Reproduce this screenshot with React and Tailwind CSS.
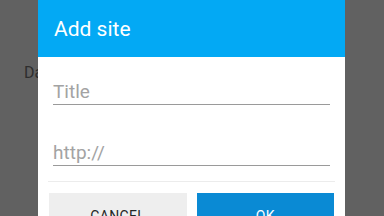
import React from "react";

const font = { fontFamily: "Roboto, 'Liberation Sans', sans-serif" };

function Field({ placeholder, className = "" }) {
  return (
    <div className={"border-b-[1.5px] border-[#9a9a9a] " + className}>
      <div className="h-[24px] leading-[24px] text-[19px] text-[#a3a3a3]">{placeholder}</div>
    </div>
  );
}

export default function App() {
  return (
    <div className="relative w-[384px] h-[216px] overflow-hidden bg-[#616161]" style={font}>
      {/* page behind the dimmed overlay */}
      <div className="pl-[24px] pt-[64px] text-[16px] leading-[18px] text-[#2e2e2e]">Data</div>

      {/* dialog */}
      <div className="absolute left-[38px] top-0 w-[307px] h-[240px] bg-white flex flex-col">
        <div className="h-[57px] bg-[#03a9f4] flex items-center px-[16px] pt-[2px]">
          <span className="text-white text-[21px] leading-none">Add site</span>
        </div>
        <div className="px-[15px] pt-[23px]">
          <Field placeholder="Title" />
          <Field placeholder="http://" className="mt-[36px]" />
        </div>
        <div className="mt-[15px] mx-[10px] h-px bg-[#ececec]" />
        <div className="mt-[11px] px-[11px] flex gap-[10px]">
          <button className="flex-1 h-[46px] bg-[#eeeeee] text-[#262626] text-[14px] font-normal tracking-wide">
            CANCEL
          </button>
          <button className="flex-1 h-[46px] bg-[#0a8ad4] text-white text-[14px] font-normal tracking-wide">
            OK
          </button>
        </div>
      </div>
    </div>
  );
}
